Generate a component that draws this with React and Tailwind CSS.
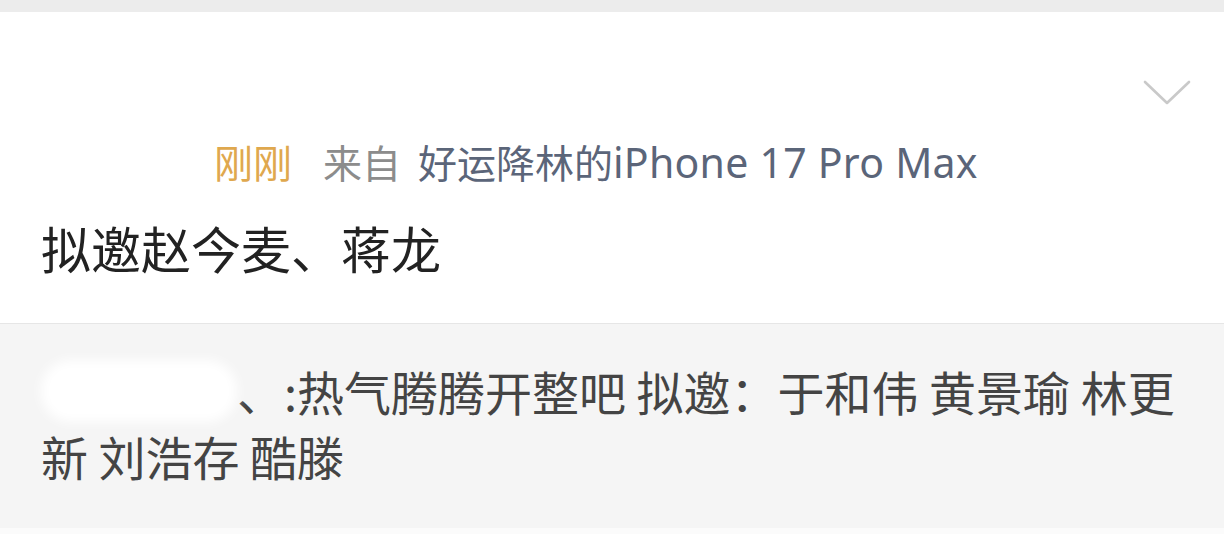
export default function App() {
  const font = { fontFamily: '"Noto Sans CJK SC", "Noto Sans", sans-serif' };
  const latin = { fontFamily: '"Noto Sans", "Noto Sans CJK SC", sans-serif' };
  return (
    <div className="w-[1224px] h-[534px] bg-white overflow-hidden flex flex-col" style={font}>
      <div className="h-[12px] bg-[#ececec] shrink-0" />
      <div className="relative h-[311px] shrink-0 bg-white">
        <svg className="absolute left-[1143px] top-[68px]" width="48" height="26" viewBox="0 0 48 26">
          <path d="M2 2 L24 23 L46 2" fill="none" stroke="#c9c9c9" strokeWidth="2.6" strokeLinecap="round" strokeLinejoin="round" />
        </svg>
        <div className="pt-[126px] pl-[214px] flex items-baseline text-[39px] leading-[46px] whitespace-nowrap">
          <span className="text-[#dfa84e]">刚刚</span>
          <span className="ml-[31px] text-[#8c8c8c]">来自</span>
          <span className="ml-[17px] text-[#5b6579]">
            好运降林的<span className="text-[41px] tracking-[0.25px]" style={latin}>iPhone 17 Pro Max</span>
          </span>
        </div>
        <div className="pl-[41px] mt-[32px] text-[50px] leading-[60px] text-[#222222] whitespace-nowrap">
          拟邀赵今麦、蒋龙
        </div>
      </div>
      <div className="relative h-[205px] shrink-0 bg-[#f5f5f5] border-t border-[#e6e6e6]">
        <div className="pl-[41px] pt-[34px] text-[47px] leading-[65px] text-[#444444] whitespace-nowrap">
          <div className="flex items-center">
            <span className="inline-block w-[196px] h-[62px] rounded-[30px] bg-white blur-[6px]" />
            <span>、:热气腾腾开整吧 拟邀：于和伟 黄景瑜 林更</span>
          </div>
          <div>新 刘浩存 酷滕</div>
        </div>
      </div>
      <div className="flex-1 bg-[#fbfbfb]" />
    </div>
  );
}
